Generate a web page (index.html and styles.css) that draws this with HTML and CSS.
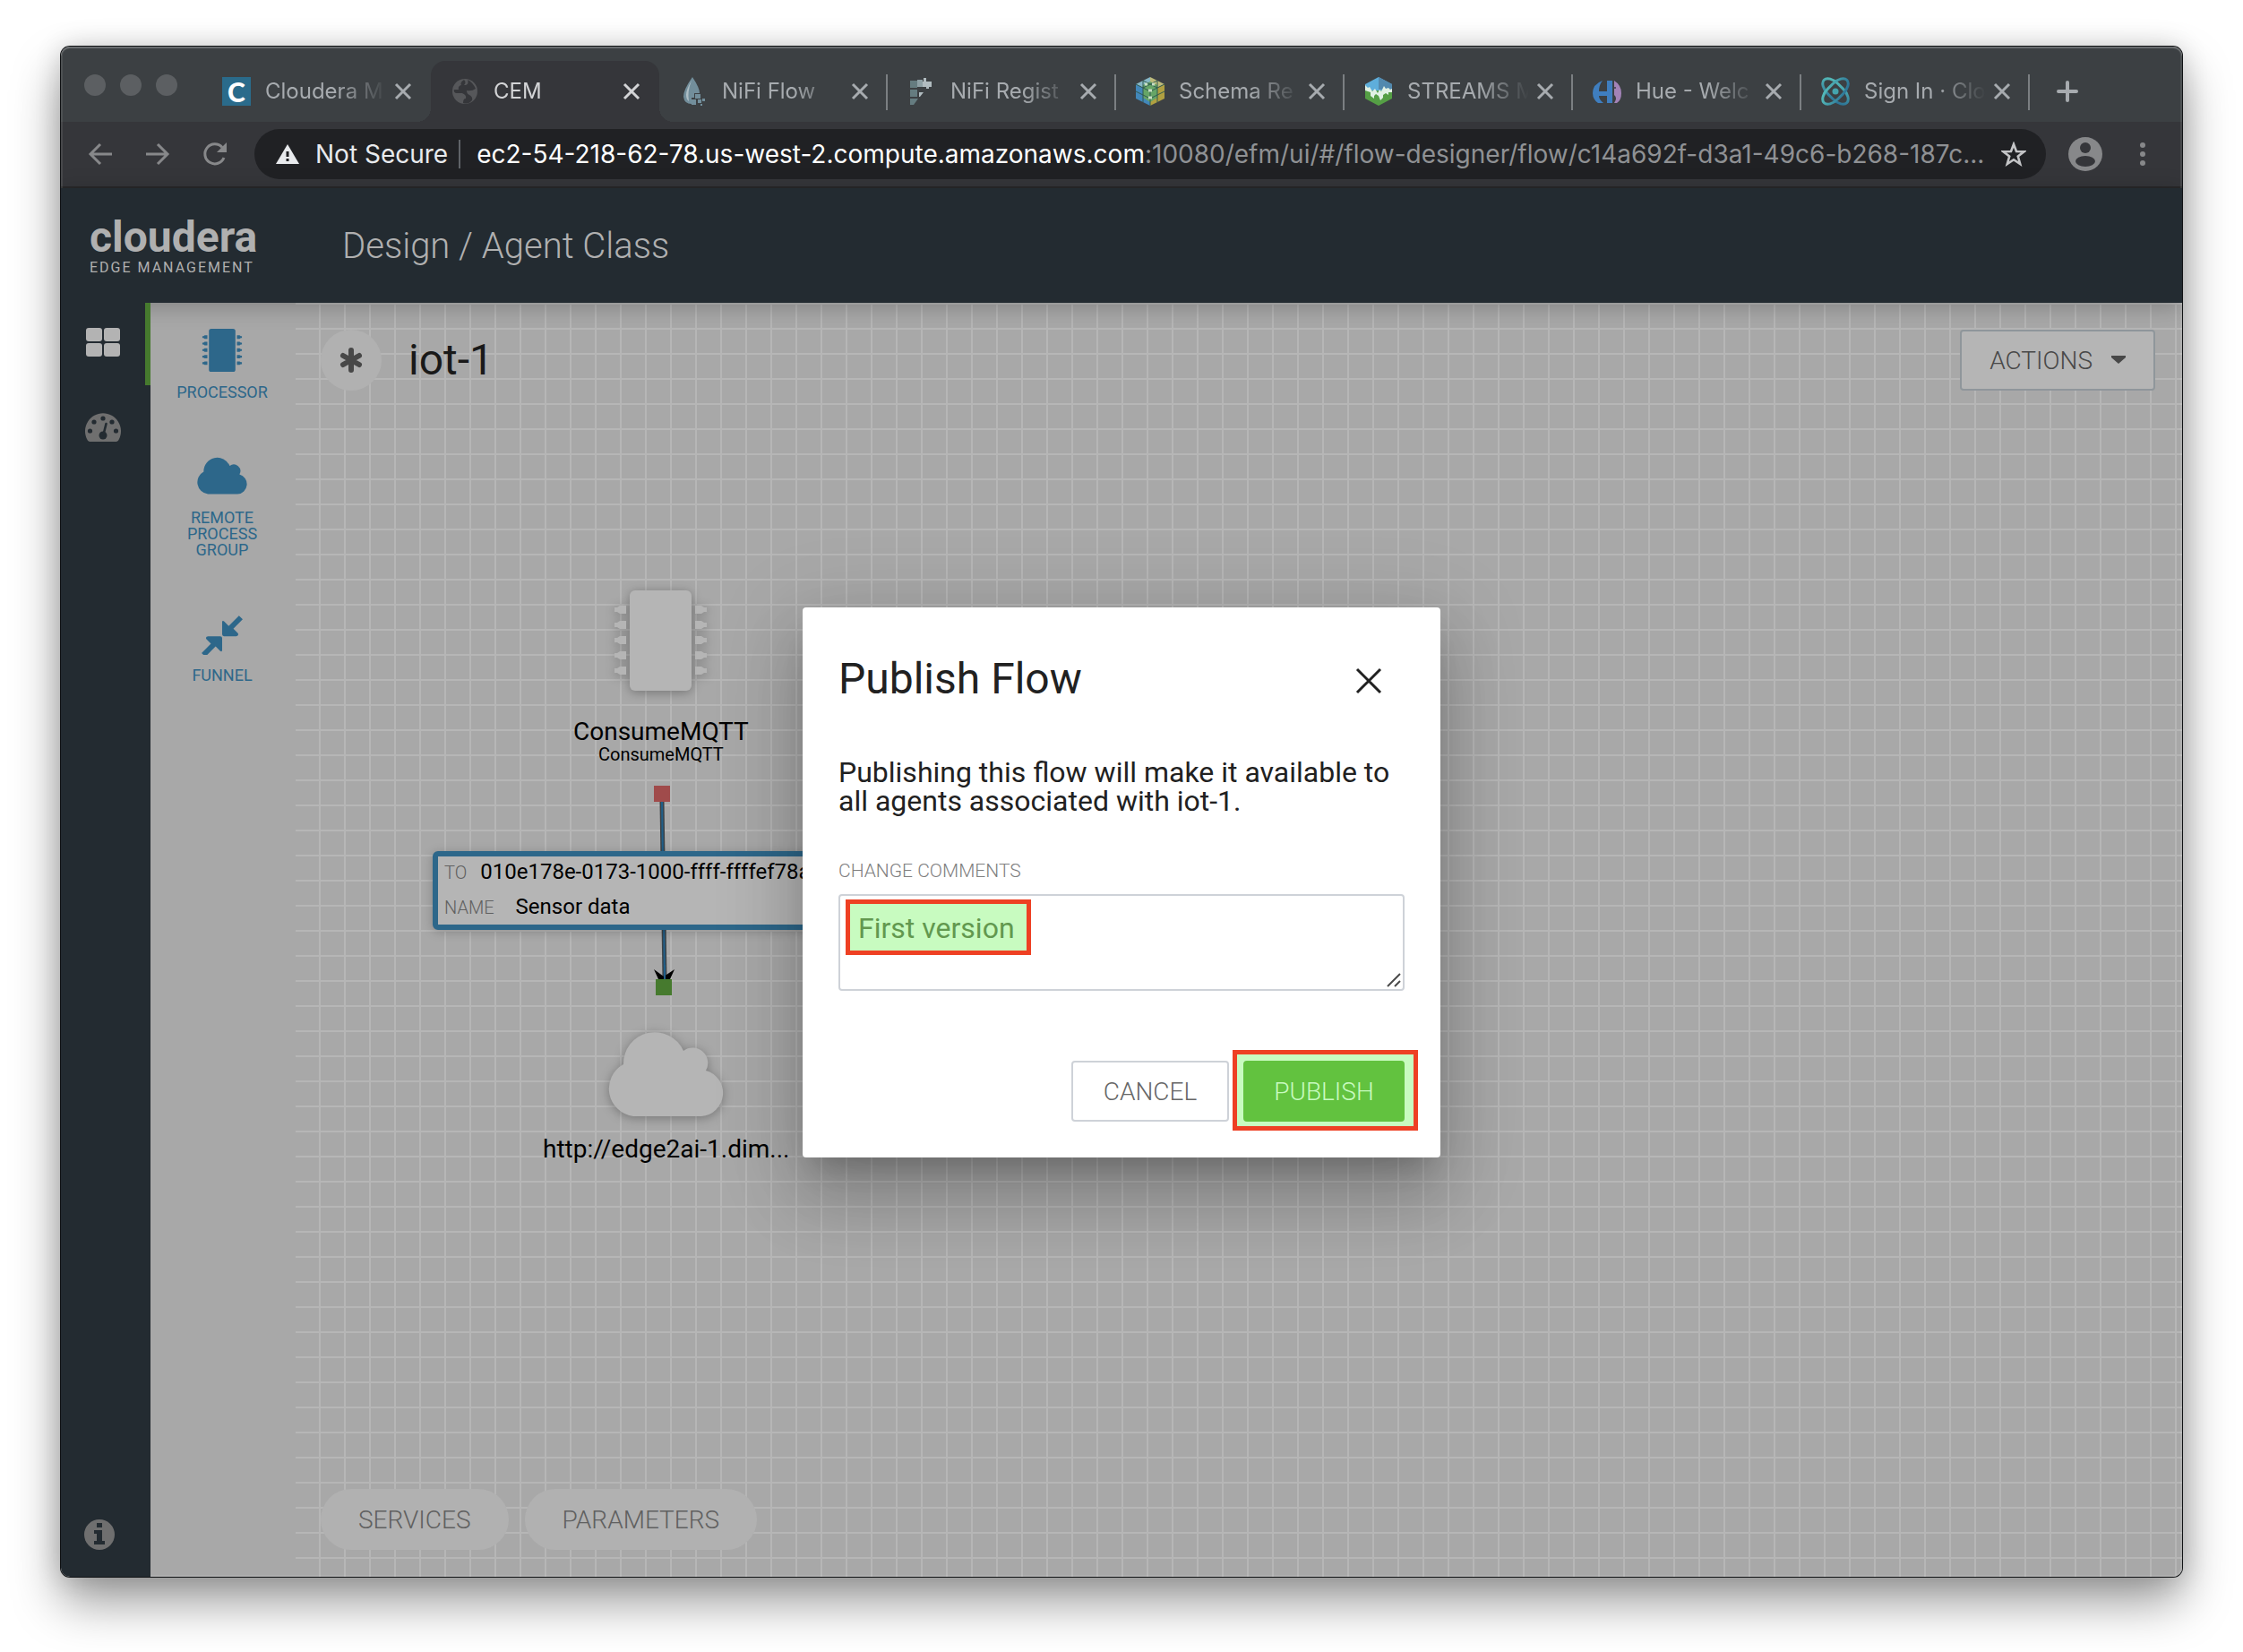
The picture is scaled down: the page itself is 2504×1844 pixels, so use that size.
FILE: index.html
```html
<!DOCTYPE html>
<html lang="en">
<head>
<meta charset="utf-8">
<title>CEM</title>
<link rel="stylesheet" href="styles.css">
</head>
<body>
<svg class="defs" aria-hidden="true">
  <symbol id="cross" viewBox="0 0 20 20"><path d="M2 2L18 18M18 2L2 18" fill="none" stroke="currentColor" stroke-width="3"/></symbol>
  <symbol id="cloud" viewBox="0 0 129 95"><path d="M28 95A31 31 0 0 1 17 37A35 35 0 0 1 84 22A17 17 0 0 1 109 44A26 26 0 0 1 104 95Z" fill="currentColor"/></symbol>
  <symbol id="chip" viewBox="0 0 103 112">
    <g fill="currentColor"><rect x="17" width="69" height="112" rx="6"/>
    <path id="pin" d="M0 19h3l3-2h7v9H6l-3-2H0z"/><use href="#pin" y="17"/><use href="#pin" y="34"/><use href="#pin" y="51"/><use href="#pin" y="68"/>
    <g transform="matrix(-1 0 0 1 103 0)"><use href="#pin"/><use href="#pin" y="17"/><use href="#pin" y="34"/><use href="#pin" y="51"/><use href="#pin" y="68"/></g></g>
  </symbol>
</svg>

<div class="window">
  <div class="tabstrip">
    <div class="lights"><span class="light"></span><span class="light"></span><span class="light"></span></div>
    <div class="tabs">
      <div class="tab"><span class="favicon favicon-c">C</span><span class="tab-title">Cloudera M</span><button class="tab-close" aria-label="Close tab"><svg class="cross"><use href="#cross"/></svg></button></div>
      <div class="tab tab-active"><svg class="favicon" viewBox="0 0 32 32"><circle cx="16" cy="16" r="14" fill="#56575a"/><path d="M15 3Q10 6 12 9Q8 10 9 14L4 14Q3 17 6 18L13 18Q18 20 17 24Q14 24 14 29Q20 31 24 26Q25 22 21 20Q18 19 18 15Q24 16 28 13Q25 6 19 3Q21 9 15 9Q18 6 15 3Z" fill="#35363a"/></svg><span class="tab-title">CEM</span><button class="tab-close" aria-label="Close tab"><svg class="cross"><use href="#cross"/></svg></button></div>
      <div class="tab"><svg class="favicon" viewBox="0 0 32 32"><path d="M15 0Q5 14 5 22Q6 30 14 30V23H17V18H23Q23 12 15 0Z" fill="#728e9b"/><path d="M14 4Q8 14 8 20Q8 25 11 27Q9 16 14 4" fill="#aebec5"/><path d="M18 19h6v5h-6zM14 25h5v6h-5zM21 25h4v4h-4zM26 24h3v3h-3zM24 30h2v2h-2z" fill="#728e9b"/></svg><span class="tab-title">NiFi Flow</span><button class="tab-close" aria-label="Close tab"><svg class="cross"><use href="#cross"/></svg></button></div>
      <div class="tab"><svg class="favicon" viewBox="0 0 32 32"><path d="M3 4h8v8H3zM3 14h8v8H3zM3 24h9l-5 7H3z" fill="#657c80"/><path d="M11 3h6v8h-6z" fill="#8ea0a5"/><path d="M18 1h3v4h6v6h-3v2h-3v-2h-4V5h1zM13 17h5l-4 5h-1z" fill="#b1bcc0"/></svg><span class="tab-title">NiFi Regist</span><button class="tab-close" aria-label="Close tab"><svg class="cross"><use href="#cross"/></svg></button></div>
      <div class="tab"><svg class="favicon" viewBox="0 0 32 32"><path d="M16 0L0 8L16 16Z" fill="#87b8c6"/><path d="M16 0L32 8L16 16Z" fill="#bdbb7b"/><path d="M0 8V24L16 32V16Z" fill="#4287b9"/><path d="M32 8V24L16 32V16Z" fill="#b0a041"/><path d="M8 9L16 5L24 9V23L16 28L8 23Z" fill="#66a567"/><path d="M0 8L16 16L32 8M16 16V32M0 16L16 24L32 16M8 4V28M24 4V28M8 4L24 12M24 4L8 12" fill="none" stroke="#315b50" stroke-width="1"/><path d="M10 8h3M18 8h3M14 15h4M14 23h4" stroke="#c8dfc4" stroke-width="3"/></svg><span class="tab-title">Schema Re</span><button class="tab-close" aria-label="Close tab"><svg class="cross"><use href="#cross"/></svg></button></div>
      <div class="tab"><svg class="favicon" viewBox="0 0 32 32"><path d="M16 0L31 8V16H1V8Z" fill="#5eaedb"/><path d="M16 0L31 8V14H16Z" fill="#5289ae"/><path d="M1 15H31V24L16 32L1 24Z" fill="#559f45"/><path d="M1 9L4 12L6 11L9 16L12 13L15 18L17 14L19 16L22 10L24 13L27 12L29 14L31 13V17L27 17V20L24 18L21 20V23L18 26L16 21L13 19L11 21V24L7 21V17L1 15Z" fill="#e1f1e4"/></svg><span class="tab-title">STREAMS M</span><button class="tab-close" aria-label="Close tab"><svg class="cross"><use href="#cross"/></svg></button></div>
      <div class="tab"><svg class="favicon" viewBox="0 0 32 32"><path d="M11 4Q0 8 0 18Q0 25 6 29H12Q7 25 7 21H16V29H22V4H16V16H7Q7 9 11 4Z" fill="#3f7ebf"/><path d="M24 4Q32 9 32 18Q32 26 27 29H24Q28 23 24 20Z" fill="#a383b7"/><circle cx="25" cy="12" r="1" fill="#3c4043"/></svg><span class="tab-title">Hue - Welc</span><button class="tab-close" aria-label="Close tab"><svg class="cross"><use href="#cross"/></svg></button></div>
      <div class="tab"><svg class="favicon" viewBox="0 0 32 32"><defs><linearGradient id="atom" x2="1" y2="1"><stop stop-color="#58c1bc"/><stop offset="1" stop-color="#286b91"/></linearGradient></defs><g fill="none" stroke="url(#atom)" stroke-width="3"><rect x="-2" y="8" width="36" height="16" rx="14" ry="8" transform="rotate(45 16 16)"/><rect x="-2" y="8" width="36" height="16" rx="14" ry="8" transform="rotate(-45 16 16)"/></g><circle cx="16" cy="16" r="3.5" fill="#45a4ad"/></svg><span class="tab-title">Sign In · Clo</span><button class="tab-close" aria-label="Close tab"><svg class="cross"><use href="#cross"/></svg></button></div>
    </div>
    <button class="new-tab" aria-label="New tab"><svg width="24" height="24" viewBox="0 0 24 24"><path d="M12 2V22M2 12H22" stroke="currentColor" stroke-width="4" stroke-linecap="round"/></svg></button>
  </div>

  <div class="toolbar">
    <div class="toolbar-nav">
      <button class="tool" aria-label="Back"><svg viewBox="0 0 28 28"><path d="M27 14H3M14 3L3 14L14 25" class="line"/></svg></button>
      <button class="tool" aria-label="Forward"><svg viewBox="0 0 28 28"><path d="M1 14H25M14 3L25 14L14 25" class="line"/></svg></button>
      <button class="tool" aria-label="Reload"><svg viewBox="0 0 28 28"><path d="M24 18A11 11 0 1 1 22 6.500" class="line"/><path d="M27 1V12H16Z" fill="currentColor"/></svg></button>
    </div>
    <div class="omnibox">
      <svg class="warning" viewBox="0 0 26 22"><path d="M13 0L26 22H0Z" fill="#e8eaed"/><path d="M13 8V14M13 16V19" stroke="#202124" stroke-width="3"/></svg>
      <span class="secure">Not Secure</span>
      <span class="omni-sep"></span>
      <span class="url"><span class="host">ec2-54-218-62-78.us-west-2.compute.amazonaws.com</span>:10080/efm/ui/#/flow-designer/flow/c14a692f-d3a1-49c6-b268-187c...</span>
      <button class="tool star" aria-label="Bookmark"><svg viewBox="0 0 28 28"><path d="M14 3L17 11L25.500 11.300L18.800 16.500L21.200 25L14 20.200L6.800 25L9.200 16.500L2.500 11.300L11 11Z" fill="none" stroke="currentColor" stroke-width="2.600"/></svg></button>
    </div>
    <button class="avatar" aria-label="Profile"><svg width="38" height="38" viewBox="0 0 38 38"><circle cx="19" cy="19" r="19" fill="currentColor"/><circle cx="19" cy="12" r="6" fill="#35363a"/><ellipse cx="19" cy="27" rx="11" ry="6" fill="#35363a"/></svg></button>
    <button class="menu" aria-label="Menu"><svg width="8" height="28" viewBox="0 0 8 28"><g fill="currentColor"><circle cx="4" cy="4" r="3"/><circle cx="4" cy="14" r="3"/><circle cx="4" cy="24" r="3"/></g></svg></button>
  </div>

  <div class="app">
    <header class="header">
      <div class="brand"><span class="wordmark">cloudera</span><span class="product">EDGE MANAGEMENT</span></div>
      <h1 class="crumb">Design / Agent Class</h1>
    </header>
    <div class="body">
      <nav class="rail">
        <a href="#design" class="rail-item rail-active" aria-label="Design"><svg width="40" height="34" viewBox="0 0 40 34"><g fill="#b3b3b3"><rect x="1" y="1" width="18" height="15" rx="3"/><rect x="21" y="1" width="18" height="15" rx="3"/><rect x="1" y="18" width="18" height="15" rx="3"/><rect x="21" y="18" width="18" height="15" rx="3"/></g></svg></a>
        <a href="#monitor" class="rail-item" aria-label="Monitor"><svg width="40" height="34" viewBox="0 0 40 34"><path d="M5 33Q3 33 2 30A20 20 0 1 1 38 30Q37 33 35 33Z" fill="#6f6f6f"/><g fill="#232b31"><circle cx="5.500" cy="21" r="2.600"/><circle cx="10" cy="11" r="2.600"/><circle cx="20" cy="7" r="2.600"/><circle cx="30" cy="11" r="2.600"/><circle cx="34.500" cy="21" r="2.600"/><circle cx="20" cy="26" r="4.500"/></g><path d="M20.500 25L23.500 13" stroke="#232b31" stroke-width="2.600" stroke-linecap="round"/></svg></a>
        <a href="#about" class="rail-item rail-info" aria-label="About"><svg width="34" height="34" viewBox="0 0 34 34"><circle cx="17" cy="17" r="17" fill="#6f6f6f"/><path d="M14 4h6v5h-6zM11 12h9v12h3v4H11v-4h3v-8h-3z" fill="#232b31"/></svg></a>
      </nav>
      <aside class="palette">
        <button class="component"><svg class="component-icon"><use href="#chip"/></svg>PROCESSOR</button>
        <button class="component"><svg class="component-icon component-cloud"><use href="#cloud"/></svg>REMOTE PROCESS GROUP</button>
        <button class="component"><svg class="component-icon" viewBox="0 -4 44 46"><path id="arrow" d="M22 7Q22 5 24 6L29 11L40 0L44 4L34 14L39 19Q40 22 37 22H24Q22 22 22 20Z" fill="currentColor"/><use href="#arrow" transform="rotate(180 22 22)"/></svg>FUNNEL</button>
      </aside>
      <main class="canvas">
        <div class="canvas-top">
          <span class="status"><svg width="28" height="28" viewBox="0 0 28 28"><path d="M14 3V25M5 9L23 19M23 9L5 19" stroke="#484848" stroke-width="6" stroke-linecap="round"/></svg></span>
          <h2 class="flow-name">iot-1</h2>
          <button class="actions">ACTIONS<svg width="16" height="10" viewBox="0 0 16 10"><path d="M0 0H16V2L8 9L0 2Z" fill="currentColor"/></svg></button>
        </div>

        <div class="graph">
          <svg class="wires" width="40" height="240" viewBox="0 0 40 240">
            <path d="M20 18L23 216" stroke="#3b4247" stroke-width="5"/><path d="M20 18L23 216" stroke="#205f89" stroke-width="2"/>
            <path d="M11 205L22 213L34 205L29 216H16Z" fill="#000"/><path d="M23 200V216" stroke="#205f89" stroke-width="2"/>
            <rect x="11" width="18" height="18" fill="#a04b4b"/><rect x="13" y="216" width="18" height="18" fill="#467a2e"/>
          </svg>
          <div class="node node-processor"><svg width="103" height="112"><use href="#chip"/></svg><span class="node-name">ConsumeMQTT</span><span class="node-type">ConsumeMQTT</span></div>
          <dl class="connection">
            <div class="connection-row"><dt>TO</dt><dd>010e178e-0173-1000-ffff-ffffef78a</dd></div>
            <div class="connection-row connection-named"><dt>NAME</dt><dd>Sensor data</dd></div>
          </dl>
          <div class="node node-remote"><svg width="129" height="95"><use href="#cloud"/></svg><span class="node-name">http://edge2ai-1.dim...</span></div>
        </div>

        <div class="canvas-bottom"><button class="pill">SERVICES</button><button class="pill">PARAMETERS</button></div>
      </main>
    </div>

    <div class="overlay">
      <form class="dialog" role="dialog" aria-labelledby="dialog-title">
        <div class="dialog-head"><h2 id="dialog-title">Publish Flow</h2><button type="button" class="dialog-close" aria-label="Close"><svg width="32" height="32" viewBox="0 0 32 32"><path d="M3 3L29 29M29 3L3 29" stroke="currentColor" stroke-width="3"/></svg></button></div>
        <p class="dialog-text">Publishing this flow will make it available to all agents associated with iot-1.</p>
        <label class="field-label" for="comments">CHANGE COMMENTS</label>
        <div class="field"><span class="marker marker-text"></span><textarea id="comments" class="comments">First version</textarea><svg class="grip" width="16" height="16" viewBox="0 0 16 16"><path d="M1 15L15 1M9 15L15 9" stroke="#4a4a4a" stroke-width="2"/></svg></div>
        <div class="dialog-actions"><button type="button" class="btn">CANCEL</button><div class="marked"><span class="marker marker-button"></span><button type="submit" class="btn btn-primary">PUBLISH</button></div></div>
      </form>
    </div>
  </div>
</div>
</body>
</html>
```
FILE: styles.css
```css
* { box-sizing: border-box; }
body {
  margin: 0;
  min-height: 100vh;
  padding: 52px 68px 84px;
  display: flex;
  background: #fff;
  font-family: Roboto, sans-serif;
}
button { border: 0; padding: 0; margin: 0; background: none; color: inherit; font: inherit; }
h1, h2, p, dl, dd { margin: 0; font-weight: 400; }
svg { display: block; flex: none; }
.defs { position: absolute; width: 0; height: 0; }

.window {
  position: relative;
  flex: 1;
  min-width: 0;
  display: flex;
  flex-direction: column;
  border-radius: 10px;
  overflow: hidden;
  box-shadow: 0 0 0 1px #101214, 0 28px 54px rgba(0, 0, 0, .4), 0 0 30px rgba(0, 0, 0, .16);
}
.window::after {
  content: "";
  position: absolute;
  inset: 0;
  border-radius: 10px;
  box-shadow: inset 0 0 0 2px rgba(255, 255, 255, .09), inset 0 2px 0 rgba(255, 255, 255, .16);
  pointer-events: none;
}

/* Browser chrome */
.tabstrip {
  height: 84px;
  display: flex;
  align-items: center;
  padding-left: 26px;
  background: #3c4043;
  color: #a7abaf;
  font-family: Inter, sans-serif;
}
.lights { display: flex; gap: 16px; margin: 2px 28px 0 0; }
.light { width: 24px; height: 24px; border-radius: 50%; background: #5c5f62; }
.tabs { display: flex; align-self: flex-end; min-width: 0; }
.tab {
  position: relative;
  flex: 0 1 255px;
  width: 255px;
  height: 68px;
  display: flex;
  align-items: center;
  padding: 0 21px 0 22px;
}
.tab:nth-child(n+3)::after {
  content: "";
  position: absolute;
  right: 0;
  top: 15px;
  width: 2px;
  height: 40px;
  background: #7b7f82;
}
.tab-active { background: #35363a; border-radius: 16px 16px 0 0; color: #d3d4d6; }
.tab-active::before, .tab-active::after {
  content: "";
  position: absolute;
  bottom: 0;
  width: 16px;
  height: 16px;
}
.tab-active::before { right: 100%; background: radial-gradient(circle at 0 0, transparent 16px, #35363a 16px); }
.tab-active::after { left: 100%; background: radial-gradient(circle at 100% 0, transparent 16px, #35363a 16px); }
.favicon { width: 32px; height: 32px; flex: none; margin-right: 16px; }
.favicon-c {
  display: grid;
  place-items: center;
  background: #2a6b8b;
  color: #fff;
  font: 900 30px/32px Lato, sans-serif;
}
.tab-title {
  flex: 1;
  min-width: 0;
  white-space: nowrap;
  font-size: 24px;
  line-height: 32px;
  mask-image: linear-gradient(90deg, #000 calc(100% - 64px), transparent calc(100% - 8px));
}
.cross { width: 20px; height: 20px; }
.new-tab { margin: 16px 0 0 30px; }

.toolbar {
  height: 74px;
  padding: 0 40px 0 30px;
  display: flex;
  align-items: center;
  background: #35363a;
  border-bottom: 2px solid #282829;
  color: #87888a;
  font-family: Inter, sans-serif;
}
.toolbar-nav { display: flex; gap: 36px; margin-right: 30px; }
.tool svg { width: 28px; height: 28px; }
.line { fill: none; stroke: currentColor; stroke-width: 3; }
.omnibox {
  flex: 1;
  min-width: 0;
  height: 56px;
  display: flex;
  align-items: center;
  padding: 0 22px 0 24px;
  border-radius: 28px;
  background: #202124;
  font-size: 28px;
  line-height: 36px;
  white-space: nowrap;
}
.warning { width: 26px; height: 22px; margin-right: 18px; }
.secure { color: #e8eaed; }
.omni-sep { width: 2px; height: 32px; margin: 0 18px 0 12px; background: #5f6368; }
.url { flex: 1; min-width: 0; color: #8f9194; }
.host { color: #fff; }
.star { color: #c4c5c7; }
.avatar { margin: 0 41px 0 25px; }

/* Application */
.app { position: relative; flex: 1; display: flex; flex-direction: column; }
.header {
  position: relative;
  z-index: 1;
  height: 128px;
  display: flex;
  align-items: center;
  gap: 94px;
  padding: 2px 32px 0;
  background: #232b31;
  color: #b0b0b0;
  box-shadow: 0 4px 24px rgba(0, 0, 0, .24);
}
.brand { display: flex; flex-direction: column; width: 188px; }
.wordmark { font-size: 48px; line-height: 48px; font-weight: 700; }
.product { font-size: 16px; line-height: 20px; letter-spacing: 2px; white-space: nowrap; }
.crumb { font-size: 40px; line-height: 48px; font-weight: 300; }
.body { flex: 1; display: flex; }
.rail {
  position: relative;
  z-index: 2;
  width: 100px;
  display: flex;
  flex-direction: column;
  background: #232b31;
}
.rail-item { display: block; height: 92px; padding: 27px 0 0 27px; }
.rail-item + .rail-item { padding-top: 30px; }
.rail-active { border-right: 6px solid #467a2e; }
.rail-info { margin-top: auto; height: 94px; padding-left: 26px; }
.palette {
  width: 162px;
  display: flex;
  flex-direction: column;
  align-items: center;
  gap: 60px;
  padding: 29px 2px 0 0;
  background: #a8a8a8;
  color: #2d678a;
  box-shadow: 1px 0 4px rgba(0, 0, 0, .16);
}
.component {
  width: 96px;
  display: flex;
  flex-direction: column;
  align-items: center;
  gap: 14px;
  font-size: 18px;
  line-height: 18px;
}
.component-icon { width: 46px; height: 48px; }
.component-cloud { width: 56px; }

.canvas {
  position: relative;
  flex: 1;
  display: flex;
  flex-direction: column;
  justify-content: space-between;
  padding: 30px 30px 30px 28px;
  background:
    linear-gradient(#b6b6b6 2px, transparent 2px) 0 0 / 28px 28px,
    linear-gradient(270deg, #b6b6b6 2px, transparent 2px) 0 0 / 28px 28px,
    #a8a8a8;
}
.canvas-top { display: flex; align-items: center; }
.status {
  width: 68px;
  height: 68px;
  display: grid;
  place-items: center;
  margin-right: 30px;
  border-radius: 50%;
  background: #b1b1b1;
}
.flow-name { font-size: 48px; line-height: 56px; color: #191919; }
.actions {
  height: 68px;
  display: flex;
  align-items: center;
  gap: 21px;
  margin-left: auto;
  padding: 0 31px;
  border: 2px solid #8f969b;
  border-radius: 4px;
  background: #b5b5b5;
  color: #484848;
  font-size: 28px;
  font-weight: 300;
}
.canvas-bottom { display: flex; gap: 18px; }
.pill {
  height: 68px;
  padding: 0 42px;
  border-radius: 34px;
  background: #b1b1b1;
  color: #606060;
  font-size: 28px;
  font-weight: 300;
}

/* Nodes placed at their canvas coordinates */
.graph { position: absolute; inset: 0; color: #000; }
.wires { position: absolute; left: 389px; top: 539px; }
.node { position: absolute; display: flex; flex-direction: column; align-items: center; white-space: nowrap; }
.node svg { color: #b5b5b5; filter: drop-shadow(0 2px 6px rgba(0, 0, 0, .3)); }
.node-processor { left: 310px; top: 321px; }
.node-remote { left: 276px; top: 813px; }
.node-name { margin-top: 31px; font-size: 28px; line-height: 30px; }
.node-remote .node-name { margin-top: 22px; }
.node-type { font-size: 20px; line-height: 20px; }
.connection {
  position: absolute;
  left: 153px;
  top: 612px;
  width: 514px;
  height: 88px;
  display: flex;
  flex-direction: column;
  gap: 4px;
  padding: 0 7px;
  border: 6px solid #2d678a;
  border-radius: 6px;
  background: #b5b5b5;
  box-shadow: 0 2px 12px rgba(0, 0, 0, .22);
}
.connection-row { display: flex; align-items: baseline; gap: 15px; font-size: 24px; line-height: 34px; white-space: nowrap; }
.connection-named { gap: 24px; }
.connection-row dt { font-size: 20px; font-weight: 300; color: #606060; }

/* Publish dialog */
.overlay { position: absolute; inset: 0; z-index: 3; display: grid; place-items: center; }
.dialog {
  width: 712px;
  padding: 52px 40px 40px;
  border-radius: 4px;
  background: #fff;
  color: #212121;
  box-shadow: 0 22px 30px -14px rgba(0, 0, 0, .2), 0 48px 76px 6px rgba(0, 0, 0, .14), 0 18px 92px 16px rgba(0, 0, 0, .12);
}
.dialog-head { display: flex; align-items: center; justify-content: space-between; padding-right: 24px; }
.dialog-head h2 { font-size: 48px; line-height: 56px; }
.dialog-close { margin-top: 4px; }
.dialog-text { margin-top: 60px; font-size: 32px; line-height: 32px; }
.field-label { display: block; margin-top: 48px; font-size: 21px; line-height: 28px; font-weight: 300; color: #808080; }
.field { position: relative; margin-top: 12px; }
.comments {
  position: relative;
  display: block;
  width: 100%;
  height: 108px;
  padding: 18px 20px;
  border: 2px solid #ced2d8;
  border-radius: 4px;
  background: none;
  color: #62984f;
  font: 32px/36px Roboto, sans-serif;
  outline: 0;
  resize: none;
}
.grip { position: absolute; right: 4px; bottom: 4px; pointer-events: none; }
.marker { position: absolute; border: 5px solid #ee4023; background: #c8fbc0; }
.marker-text { left: 8px; top: 6px; width: 207px; height: 62px; }
.dialog-actions { display: flex; justify-content: flex-end; gap: 16px; margin-top: 78px; }
.btn {
  min-width: 176px;
  height: 68px;
  border: 2px solid #ced2d8;
  border-radius: 4px;
  background: #fff;
  color: #666;
  font-size: 28px;
  font-weight: 300;
}
.marked { position: relative; }
.marker-button { inset: -12px -15px -10px -12px; }
.btn-primary { position: relative; min-width: 180px; border-color: #62c23f; background: #62c23f; color: #c8fbc0; }
```
